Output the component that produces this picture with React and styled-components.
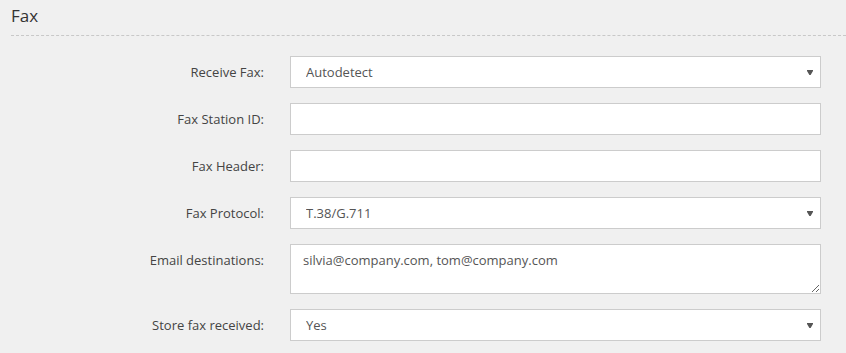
import React from 'react';
import styled, { createGlobalStyle } from 'styled-components';

const GlobalStyle = createGlobalStyle`
  body {
    margin: 0;
    background: #f0f0f0;
    font-family: 'Open Sans', 'Liberation Sans', sans-serif;
    color: #444;
  }
`;

const fields = [
  { label: 'Receive Fax:', type: 'select', value: 'Autodetect', options: ['Autodetect', 'Always', 'Never'] },
  { label: 'Fax Station ID:', type: 'input', value: '' },
  { label: 'Fax Header:', type: 'input', value: '' },
  { label: 'Fax Protocol:', type: 'select', value: 'T.38/G.711', options: ['T.38/G.711', 'T.38', 'G.711'] },
  { label: 'Email destinations:', type: 'textarea', value: 'silvia@company.com, tom@company.com' },
  { label: 'Store fax received:', type: 'select', value: 'Yes', options: ['Yes', 'No'] },
];

const App = () => {
  return (
    <>
      <GlobalStyle />
      <Section>
        <Title>Fax</Title>
        <Form>
          {fields.map(f => (
            <Row key={f.label}>
              <Label>{f.label}</Label>
              {f.type === 'select' && (
                <SelectWrap>
                  <Select defaultValue={f.value}>
                    {f.options.map(o => <option key={o}>{o}</option>)}
                  </Select>
                  <Arrow viewBox="0 0 6 5" width="6" height="5">
                    <path d="M0 0 H6 V1 L3.6 5 H2.4 L0 1 Z" fill="#555" />
                  </Arrow>
                </SelectWrap>
              )}
              {f.type === 'input' && <Input defaultValue={f.value} />}
              {f.type === 'textarea' && <TextArea defaultValue={f.value} />}
            </Row>
          ))}
        </Form>
      </Section>
    </>
  );
};

export default App;

const Section = styled.div`
  padding-left: 11px;
`

const Title = styled.h2`
  margin: 0;
  padding: 4px 0 7px;
  font-size: 17px;
  line-height: 24px;
  font-weight: 400;
  color: #333;
  border-bottom: 1px dashed #c8c8c8;
`

const Form = styled.div`
  display: flex;
  flex-direction: column;
  gap: 15px;
  padding-top: 20px;
`

const Row = styled.div`
  display: grid;
  grid-template-columns: 253px 531px;
  column-gap: 26px;
  align-items: start;
`

const Label = styled.label`
  text-align: right;
  font-size: 13px;
  line-height: 18px;
  padding-top: 7px;
  color: #444;
`

const fieldBase = `
  box-sizing: border-box;
  width: 100%;
  border: 1px solid #cccccc;
  background: #fff;
  font-family: 'Open Sans', 'Liberation Sans', sans-serif;
  font-size: 13px;
  color: #555;
  outline: none;
  margin: 0;
  border-radius: 0;
`

const Input = styled.input`
  ${fieldBase}
  height: 32px;
  padding: 0 12px;
`

const TextArea = styled.textarea`
  ${fieldBase}
  display: block;
  height: 50px;
  padding: 6px 12px;
  line-height: 18px;
  resize: vertical;
`

const SelectWrap = styled.div`
  position: relative;
`

const Select = styled.select`
  ${fieldBase}
  display: block;
  height: 32px;
  padding: 0 12px 0 15px;
  appearance: none;
  -webkit-appearance: none;
`

const Arrow = styled.svg`
  position: absolute;
  right: 8px;
  top: 14px;
  pointer-events: none;
`
